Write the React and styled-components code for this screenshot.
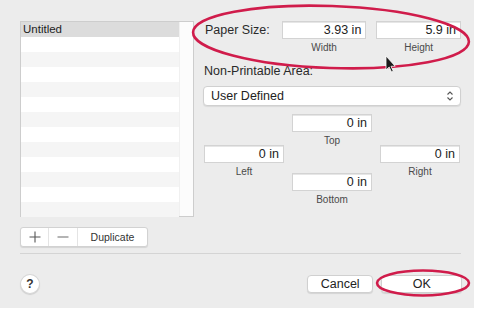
import React from 'react';
import styled, { createGlobalStyle } from 'styled-components';

const Global = createGlobalStyle`
  html, body { margin: 0; padding: 0; background: #ffffff; }
  body { font-family: "Liberation Sans", Arial, sans-serif; color: #262626; }
`

const Page = styled.div`
  position: relative;
  width: 479px;
  height: 313px;
  overflow: hidden;
  background: #ffffff;
`

const Panel = styled.div`
  width: 474px;
  height: 308px;
  box-sizing: border-box;
  background: #ececec;
  padding: 21px 13px 0 20px;
  display: flex;
  flex-direction: column;
`

const Top = styled.div`
  display: flex;
  gap: 9px;
`

const ListBox = styled.div`
  width: 174px;
  height: 196px;
  box-sizing: border-box;
  border: 1px solid #cdcdcd;
  background: #ffffff;
  display: flex;
`

const Rows = styled.div`
  flex: 1;
  display: flex;
  flex-direction: column;
`

const Row = styled.div`
  height: 15px;
  flex-shrink: 0;
  background: ${({ $selected, $odd }) => ($selected ? '#dcdcdc' : $odd ? '#f5f5f5' : '#ffffff')};
  font-size: 11.5px;
  line-height: 15px;
  padding-left: 2px;
  color: #1e1e1e;
`

const Scroller = styled.div`
  width: 13px;
  border-left: 1px solid #f0f0f0;
  background: #fcfcfc;
`

const Side = styled.div`
  width: 258px;
  display: flex;
  flex-direction: column;
`

const PaperRow = styled.div`
  display: flex;
  align-items: flex-start;
`

const Label = styled.div`
  font-size: 12.5px;
  line-height: 18px;
  color: #2a2a2a;
  padding-left: ${({ $pad }) => $pad || 0}px;
  margin-top: ${({ $mt }) => $mt || 0}px;
  width: ${({ $w }) => ($w ? `${$w}px` : 'auto')};
`

const Field = styled.div`
  display: flex;
  flex-direction: column;
  align-items: center;
  width: ${({ $w }) => $w}px;
  margin-left: ${({ $ml }) => $ml || 0}px;
`

const Input = styled.div`
  width: 100%;
  height: 18px;
  box-sizing: border-box;
  background: #ffffff;
  border: 1px solid #d3d3d3;
  box-shadow: inset 0 1px 0 #e6e6e6;
  text-align: right;
  font-size: 12.5px;
  line-height: 17px;
  padding-right: 4px;
  color: #222;
`

const Caption = styled.div`
  font-size: 10px;
  line-height: 12px;
  margin-top: 3px;
  color: #4a4a4a;
`

const Select = styled.div`
  margin-top: 6px;
  height: 20px;
  box-sizing: border-box;
  background: #ffffff;
  border: 1px solid #d0d0d0;
  border-radius: 4px;
  box-shadow: 0 1px 1px rgba(0, 0, 0, 0.08);
  display: flex;
  align-items: center;
  justify-content: space-between;
  padding: 0 6px 0 7px;
  font-size: 12.5px;
  color: #222;
`

const Margins = styled.div`
  margin-top: 8px;
  display: grid;
  grid-template-columns: 80px 80px 80px;
  grid-template-rows: 31px 28px 30px;
  column-gap: 8px;
  padding-left: 1px;
`

const Cell = styled.div`
  grid-column: ${({ $col }) => $col};
  grid-row: ${({ $row }) => $row};
  display: flex;
  flex-direction: column;
  align-items: center;
`

const SegGroup = styled.div`
  margin-top: 10px;
  display: flex;
  align-self: flex-start;
  height: 18px;
  border: 1px solid #d2d2d2;
  border-radius: 3px;
  background: #ffffff;
  box-shadow: 0 1px 1px rgba(0, 0, 0, 0.1);
`

const Seg = styled.div`
  width: ${({ $w }) => $w}px;
  display: flex;
  align-items: center;
  justify-content: center;
  font-size: 10.5px;
  color: #333;
  border-left: ${({ $first }) => ($first ? 'none' : '1px solid #e4e4e4')};
`

const Divider = styled.div`
  margin-top: 6px;
  height: 1px;
  background: #d4d4d4;
  width: 441px;
`

const Footer = styled.div`
  margin-top: 20px;
  display: flex;
  align-items: center;
  width: 442px;
`

const Help = styled.div`
  width: 18px;
  height: 18px;
  border-radius: 50%;
  background: #ffffff;
  border: 1px solid #d6d6d6;
  box-shadow: 0 1px 1px rgba(0, 0, 0, 0.12);
  display: flex;
  align-items: center;
  justify-content: center;
  font-size: 12px;
  font-weight: bold;
  color: #333;
`

const Button = styled.div`
  margin-left: ${({ $ml }) => $ml}px;
  width: ${({ $w }) => $w}px;
  height: 18px;
  box-sizing: border-box;
  background: #ffffff;
  border: 1px solid #d0d0d0;
  border-radius: 4px;
  box-shadow: 0 1px 1px rgba(0, 0, 0, 0.1);
  display: flex;
  align-items: center;
  justify-content: center;
  font-size: 12.5px;
  color: #222;
`

const Overlay = styled.svg`
  position: absolute;
  left: 0;
  top: 0;
  pointer-events: none;
`

const Chevrons = () => (
  <svg width="8" height="12" viewBox="0 0 8 12">
    <path d="M1.5 4.5 L4 2 L6.5 4.5 M1.5 7.5 L4 10 L6.5 7.5" fill="none" stroke="#555" strokeWidth="1.1" />
  </svg>
)

const Plus = () => (
  <svg width="12" height="12" viewBox="0 0 12 12">
    <path d="M6 0.5 V11.5 M0.5 6 H11.5" stroke="#555" strokeWidth="1.1" />
  </svg>
)

const Minus = () => (
  <svg width="12" height="12" viewBox="0 0 12 12">
    <path d="M0.5 6 H11.5" stroke="#777" strokeWidth="1.1" />
  </svg>
)

const rows = Array.from({ length: 13 }, (_, i) => i)

export default function App() {
  return (
    <Page>
      <Global />
      <Panel>
        <Top>
          <ListBox>
            <Rows>
              {rows.map((i) => (
                <Row key={i} $selected={i === 0} $odd={i % 2 === 0}>
                  {i === 0 ? 'Untitled' : ''}
                </Row>
              ))}
            </Rows>
            <Scroller />
          </ListBox>
          <Side>
            <PaperRow>
              <Label $pad={2} $w={77}>Paper Size:</Label>
              <Field $w={85}>
                <Input>3.93 in</Input>
                <Caption>Width</Caption>
              </Field>
              <Field $w={85} $ml={10}>
                <Input>5.9 in</Input>
                <Caption>Height</Caption>
              </Field>
            </PaperRow>
            <Label $pad={1} $mt={8}>Non-Printable Area:</Label>
            <Select>
              <span>User Defined</span>
              <Chevrons />
            </Select>
            <Margins>
              <Cell $col={2} $row={1}>
                <Input>0 in</Input>
                <Caption>Top</Caption>
              </Cell>
              <Cell $col={1} $row={2}>
                <Input>0 in</Input>
                <Caption>Left</Caption>
              </Cell>
              <Cell $col={3} $row={2}>
                <Input>0 in</Input>
                <Caption>Right</Caption>
              </Cell>
              <Cell $col={2} $row={3}>
                <Input>0 in</Input>
                <Caption>Bottom</Caption>
              </Cell>
            </Margins>
          </Side>
        </Top>
        <SegGroup>
          <Seg $w={27} $first><Plus /></Seg>
          <Seg $w={28}><Minus /></Seg>
          <Seg $w={69}>Duplicate</Seg>
        </SegGroup>
        <Divider />
        <Footer>
          <Help>?</Help>
          <Button $ml={267} $w={67}>Cancel</Button>
          <Button $ml={8} $w={81}>OK</Button>
        </Footer>
      </Panel>
      <Overlay width="479" height="313" viewBox="0 0 479 313">
        <ellipse cx="331" cy="37" rx="138" ry="31" fill="none" stroke="#d01c4b" strokeWidth="2.6" transform="rotate(2 331 37)" />
        <ellipse cx="423" cy="283" rx="46" ry="12.5" fill="none" stroke="#d01c4b" strokeWidth="2.6" />
        <path d="M386 56 L386 70 L389.2 67 L391.5 72 L393.3 71.2 L391 66.3 L395.2 66.2 Z" fill="#1a1a1a" stroke="#ffffff" strokeWidth="0.8" />
      </Overlay>
    </Page>
  )
}
